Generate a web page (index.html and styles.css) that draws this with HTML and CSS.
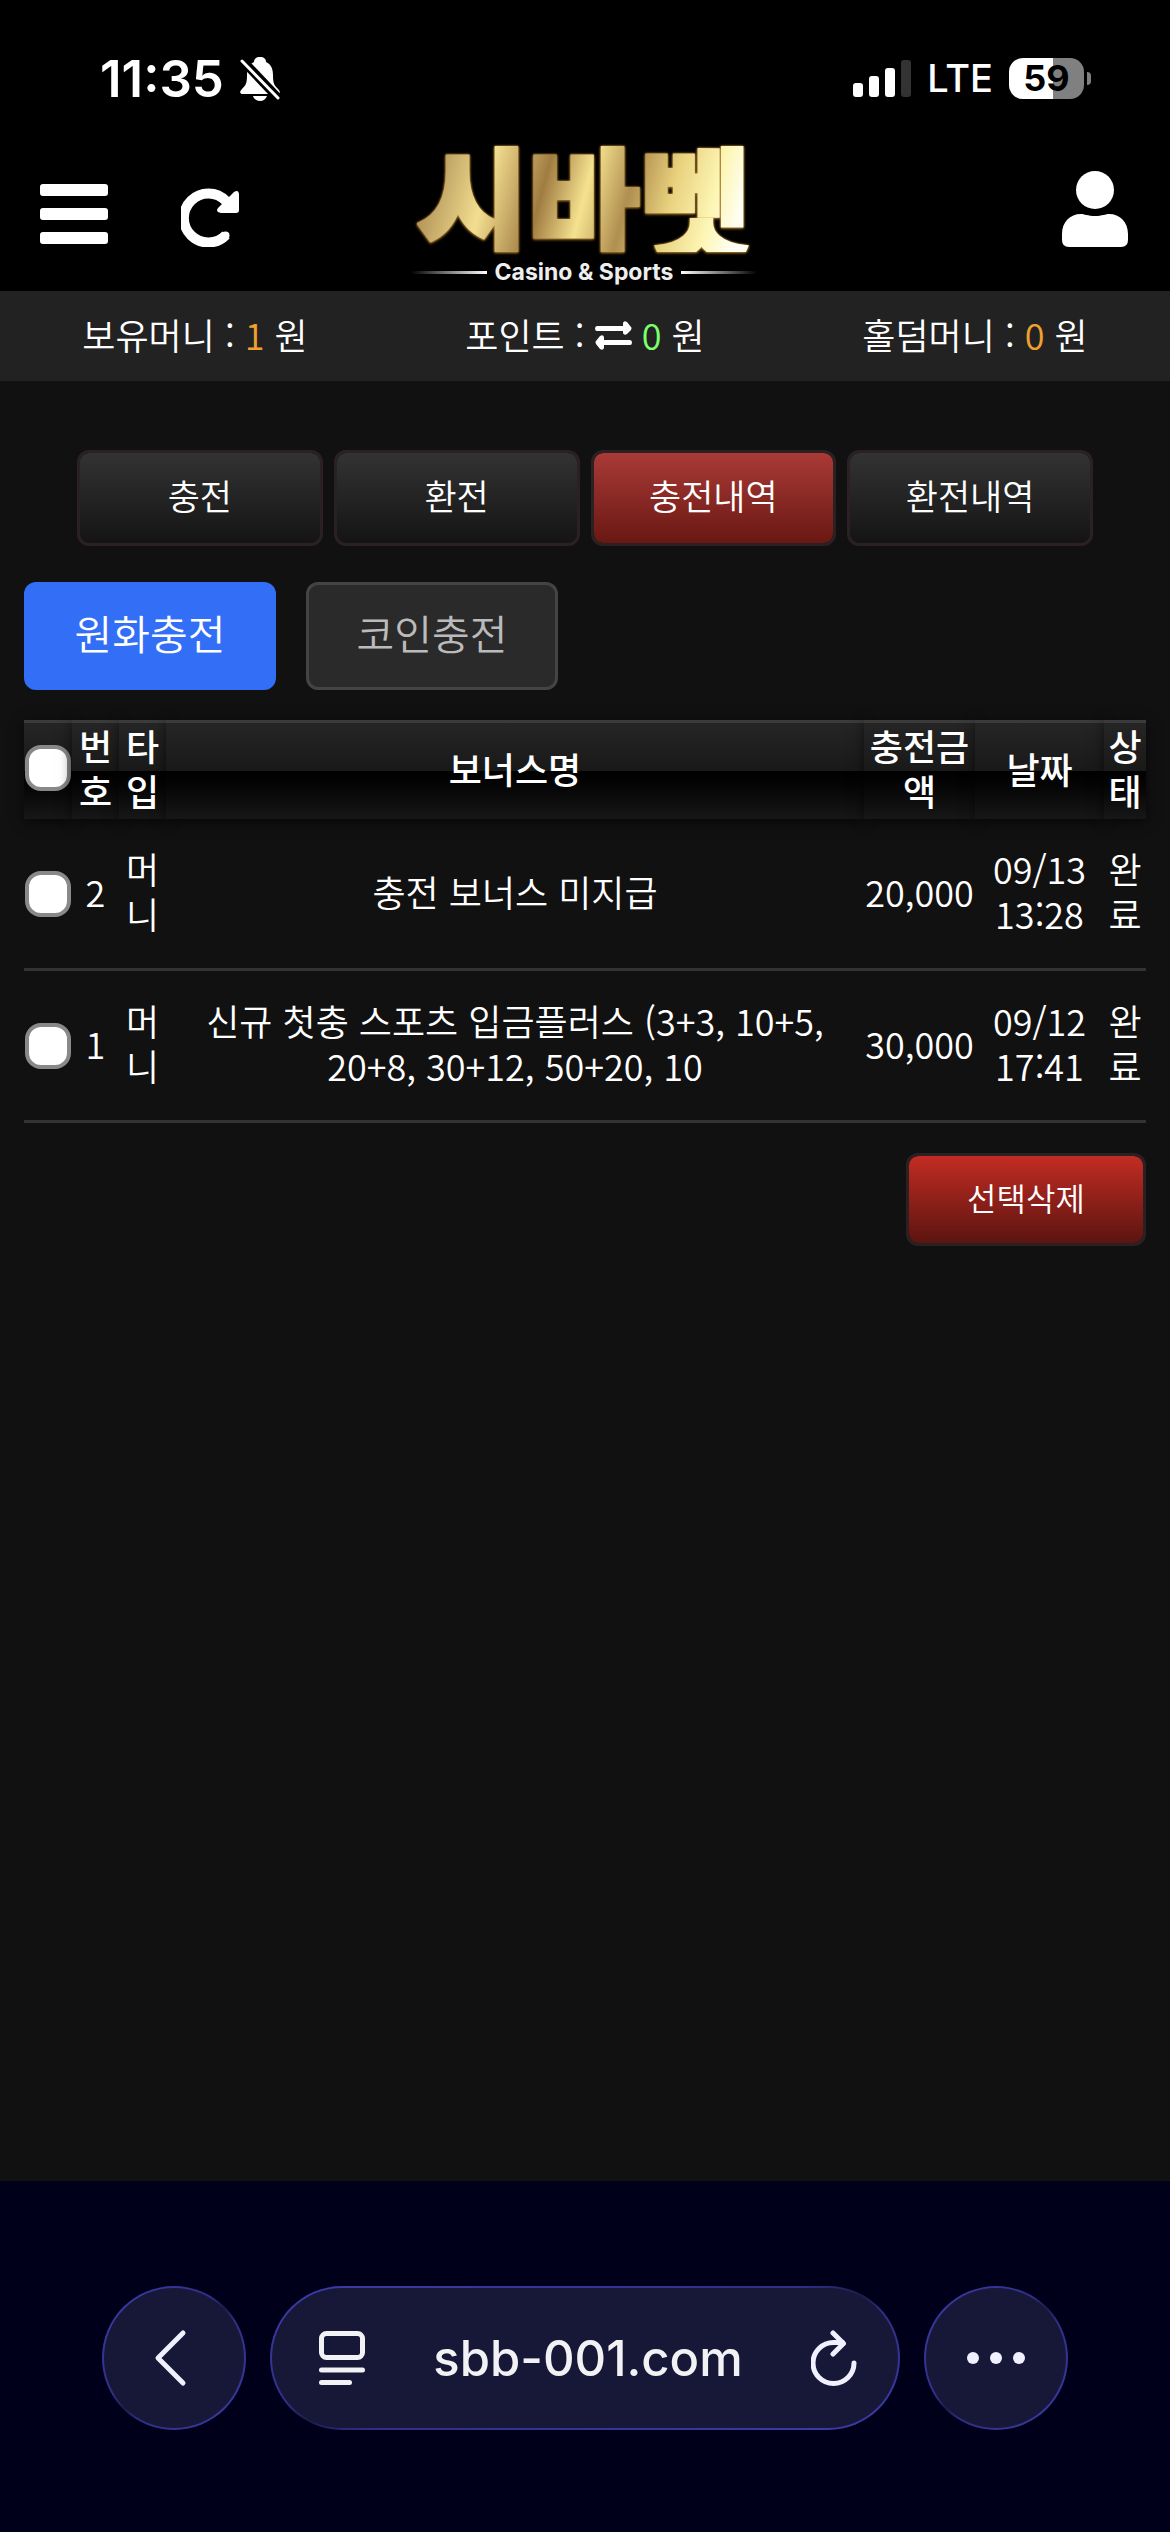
FILE: index.html
```
<!DOCTYPE html>
<html lang="ko">
<head>
    <meta charset="UTF-8">
    <meta name="viewport" content="width=device-width, initial-scale=1.0">
    <title>충전내역</title>
    <link rel="stylesheet" href="styles.css">
</head>
<body>
    <div class="status-bar">
        <div class="status-left">
            <span class="clock">11:35</span>
            <svg class="bell" viewBox="0 0 40 44" aria-hidden="true">
                <path d="M20 0c-4 0-6 2-6 5C9 7 7 12 7 18c0 8-1 10-5 14-3 3-2 5 1 5h34c3 0 4-2 1-5-4-4-5-6-5-14 0-6-2-11-7-13 0-3-2-5-6-5z" fill="#fff"/>
                <path d="M13 39h14c-1 3-4 5-7 5s-6-2-7-5z" fill="#fff"/>
                <path d="M2 3l36 38" stroke="#000" stroke-width="9"/>
                <path d="M2 4l36 37" stroke="#fff" stroke-width="3" stroke-linecap="round"/>
            </svg>
        </div>
        <div class="status-right">
            <svg class="signal" viewBox="0 0 58 38" aria-hidden="true">
                <rect x="0" y="23" width="10" height="14" rx="3" fill="#fff"/>
                <rect x="16" y="16" width="10" height="21" rx="3" fill="#fff"/>
                <rect x="32" y="8" width="10" height="29" rx="3" fill="#fff"/>
                <rect x="48" y="0" width="10" height="37" rx="3" fill="#333"/>
            </svg>
            <span class="network">LTE</span>
            <div class="battery"><span class="battery-level">59</span></div>
        </div>
    </div>

    <header class="header">
        <div class="header-left">
            <button type="button" class="icon-btn" aria-label="메뉴">
                <svg width="68" height="60" viewBox="0 0 68 60" fill="#fff">
                    <rect y="0" width="68" height="12" rx="3"/>
                    <rect y="24" width="68" height="12" rx="3"/>
                    <rect y="48" width="68" height="12" rx="3"/>
                </svg>
            </button>
            <button type="button" class="icon-btn reload-btn" aria-label="새로고침">
                <svg width="58" height="60" viewBox="0 0 58 60">
                    <path d="M45 14A24.500 24.500 0 1 0 45 48" fill="none" stroke="#fff" stroke-width="10"/>
                    <circle cx="44.500" cy="48.500" r="4" fill="#fff"/>
                    <path d="M53 5q5-3 5 3v15q0 3-3 3H40q-6-1-3-5z" fill="#fff"/>
                </svg>
            </button>
        </div>
        <a href="#" class="logo">
            <span class="logo-name">시바벳</span>
            <span class="logo-sub">Casino &amp; Sports</span>
        </a>
        <button type="button" class="icon-btn user-btn" aria-label="내 정보">
            <svg width="66" height="76" viewBox="0 0 66 76" fill="#fff">
                <ellipse cx="33" cy="19" rx="19" ry="19"/>
                <path d="M19 43c3 0 7 2 14 2s11-2 14-2c11 0 19 8 19 20v6q0 7-7 7H7q-7 0-7-7v-6c0-12 8-20 19-20z"/>
            </svg>
        </button>
    </header>

    <div class="money-bar">
        <div class="money">보유머니 : <span class="orange">1</span> 원</div>
        <div class="money">포인트 :
            <svg class="swap" width="37" height="29" viewBox="0 0 37 29" fill="#fff" aria-label="전환">
                <path d="M2 5h26V2q1-3 4-1l4 5q1 1 0 3l-4 4q-3 2-4-1V10H2q-2 0-2-2.500T2 5z"/>
                <path d="M35 19H9v-3q-1-3-4-1l-4 5q-1 1 0 3l4 5q3 2 4-1v-3h26q2 0 2-2.500T35 19z"/>
            </svg>
            <span class="green">0</span> 원</div>
        <div class="money">홀덤머니 : <span class="orange">0</span> 원</div>
    </div>

    <main class="content">
        <nav class="menu">
            <button type="button" class="menu-btn">충전</button>
            <button type="button" class="menu-btn">환전</button>
            <button type="button" class="menu-btn active">충전내역</button>
            <button type="button" class="menu-btn">환전내역</button>
        </nav>

        <div class="tabs">
            <button type="button" class="tab active">원화충전</button>
            <button type="button" class="tab">코인충전</button>
        </div>

        <table class="history">
            <colgroup>
                <col class="col-check">
                <col class="col-no">
                <col class="col-type">
                <col>
                <col class="col-amount">
                <col class="col-date">
                <col class="col-state">
            </colgroup>
            <thead>
                <tr>
                    <th><input type="checkbox" class="check" aria-label="전체 선택"></th>
                    <th>번호</th>
                    <th>타입</th>
                    <th>보너스명</th>
                    <th>충전금액</th>
                    <th>날짜</th>
                    <th>상태</th>
                </tr>
            </thead>
            <tbody>
                <tr>
                    <td class="select"><input type="checkbox" class="check" aria-label="2번 선택"></td>
                    <td>2</td>
                    <td>머니</td>
                    <td class="bonus">충전 보너스 미지급</td>
                    <td class="amount">20,000</td>
                    <td>09/13 13:28</td>
                    <td>완료</td>
                </tr>
                <tr>
                    <td class="select"><input type="checkbox" class="check" aria-label="1번 선택"></td>
                    <td>1</td>
                    <td>머니</td>
                    <td class="bonus">신규 첫충 스포츠 입금플러스 (3+3, 10+5, 20+8, 30+12, 50+20, 10</td>
                    <td class="amount">30,000</td>
                    <td>09/12 17:41</td>
                    <td>완료</td>
                </tr>
            </tbody>
        </table>

        <div class="actions">
            <button type="button" class="delete-btn">선택삭제</button>
        </div>
    </main>

    <footer class="browser-bar">
        <button type="button" class="glass round" aria-label="뒤로">
            <svg width="40" height="60" viewBox="0 0 40 60">
                <path d="M29 5L4 30l25 25" fill="none" stroke="#f0f0ff" stroke-width="5" stroke-linecap="round" stroke-linejoin="round"/>
            </svg>
        </button>
        <div class="glass address">
            <svg width="46" height="54" viewBox="0 0 46 54" fill="none" stroke="#f2f2f5" stroke-width="5" stroke-linecap="round" aria-hidden="true">
                <rect x="2.500" y="2.500" width="41" height="24" rx="5"/>
                <path d="M2.500 39h41M2.500 51.500h28"/>
            </svg>
            <span class="url">sbb-001.com</span>
            <button type="button" class="icon-btn" aria-label="페이지 새로고침">
                <svg width="46" height="56" viewBox="0 0 46 56" fill="none" stroke="#f0f0ff" stroke-width="5" stroke-linecap="round" stroke-linejoin="round">
                    <path d="M43 33A20.500 20.500 0 1 1 22.500 12.500h9"/>
                    <path d="M22 3l10.500 10.500L22 24"/>
                </svg>
            </button>
        </div>
        <button type="button" class="glass round" aria-label="더보기">
            <svg width="58" height="12" viewBox="0 0 58 12" fill="#f0f0ff">
                <circle cx="6" cy="6" r="6"/>
                <circle cx="29" cy="6" r="6"/>
                <circle cx="52" cy="6" r="6"/>
            </svg>
        </button>
    </footer>
</body>
</html>
```

FILE: styles.css
```
* {
    margin: 0;
    padding: 0;
    box-sizing: border-box;
}

body {
    display: flex;
    flex-direction: column;
    min-height: 100vh;
    background-color: #111;
    color: #fff;
    font-family: 'Noto Sans CJK KR', sans-serif;
    font-size: 36px;
    font-weight: 350;
    line-height: 45px;
}

button {
    border: none;
    background: none;
    color: inherit;
    font: inherit;
    cursor: pointer;
}

svg {
    display: block;
}

/* Phone status bar */
.status-bar {
    display: flex;
    justify-content: space-between;
    align-items: center;
    height: 141px;
    padding: 16px 78px 0 100px;
    background-color: #000;
    font-family: Inter, sans-serif;
}

.status-left,
.status-right {
    display: flex;
    align-items: center;
    gap: 16px;
}

.clock {
    font-size: 51px;
    font-weight: 600;
}

.bell {
    width: 40px;
    height: 44px;
}

.signal {
    width: 58px;
    height: 38px;
}

.network {
    font-size: 38px;
    font-weight: 500;
}

.battery {
    position: relative;
    width: 75px;
    height: 41px;
    margin-right: 8px;
    border-radius: 14px;
    background: linear-gradient(90deg, #fff 59%, #808080 59%);
    text-align: center;
}

.battery::after {
    content: "";
    position: absolute;
    top: 14px;
    right: -7px;
    width: 4px;
    height: 13px;
    border-radius: 0 4px 4px 0;
    background-color: #808080;
}

.battery-level {
    display: block;
    color: #000;
    font-size: 36px;
    font-weight: 700;
    line-height: 41px;
}

/* Header */
.header {
    display: grid;
    grid-template-columns: 1fr auto 1fr;
    align-items: center;
    height: 150px;
    padding: 0 42px 4px 40px;
    background-color: #000;
}

.header-left {
    display: flex;
    align-items: center;
    gap: 73px;
}

.reload-btn {
    padding-top: 6px;
}

.user-btn {
    justify-self: end;
    padding-bottom: 10px;
}

.logo {
    display: flex;
    flex-direction: column;
    align-items: center;
    gap: 8px;
    color: #fff;
    text-decoration: none;
}

.logo-name {
    background: linear-gradient(105deg, #9c7a45 0%, #f2de90 22%, #a17c42 38%, #f5e28f 50%, #b08f50 62%, #e9d27e 74%, #fdf6b5 86%, #fffef2 94%);
    -webkit-background-clip: text;
    background-clip: text;
    color: transparent;
    -webkit-text-stroke: 4px transparent;
    font-size: 121px;
    font-weight: 900;
    line-height: 108px;
    filter: drop-shadow(0 0 1px #c9993f) drop-shadow(0 1px 1px #7a531c);
}

.logo-sub {
    display: flex;
    align-items: center;
    gap: 8px;
    color: #eee;
    font-family: Inter, sans-serif;
    font-size: 23px;
    font-weight: 700;
    line-height: 24px;
}

.logo-sub::before,
.logo-sub::after {
    content: "";
    width: 76px;
    height: 3px;
    background: linear-gradient(90deg, transparent, #fff);
}

.logo-sub::after {
    background: linear-gradient(270deg, transparent, #fff);
}

/* Balance */
.money-bar {
    display: flex;
    align-items: center;
    height: 90px;
    padding-bottom: 4px;
    background-color: #222;
}

.money {
    flex: 1;
    text-align: center;
    white-space: nowrap;
}

.swap {
    display: inline-block;
}

.orange {
    color: #f0a030;
}

.green {
    color: #7cff6b;
}

/* Content */
.content {
    flex: 1;
    padding: 69px 24px 0;
}

.menu {
    display: flex;
    gap: 11px;
    padding: 0 53px;
}

.menu-btn {
    flex: 1;
    height: 96px;
    padding-bottom: 7px;
    border: 3px solid #2b2123;
    border-radius: 12px;
    background: linear-gradient(#333, #141414) padding-box;
    font-size: 35px;
}

.menu-btn.active {
    background: linear-gradient(#a93a36, #6a1813) padding-box;
}

.tabs {
    display: flex;
    gap: 30px;
    margin-top: 36px;
}

.tab {
    width: 252px;
    height: 108px;
    padding-bottom: 7px;
    border: 3px solid #444;
    border-radius: 12px;
    background-color: #2a2a2a;
    color: #bbb;
    font-size: 41px;
}

.tab.active {
    border-color: #326ef6;
    background-color: #326ef6;
    color: #fff;
}

.history {
    width: 100%;
    margin-top: 30px;
    border-spacing: 0;
    table-layout: fixed;
}

.col-check {
    width: 48px;
}

.col-no,
.col-type {
    width: 47px;
}

.col-amount {
    width: 111px;
}

.col-date {
    width: 129px;
}

.col-state {
    width: 42px;
}

.history th {
    height: 99px;
    padding-bottom: 6px;
    border-top: 3px solid #3b3b3b;
    background: linear-gradient(#252525, #191919 50%, #000 50%, #050505 65%, #171717);
    box-shadow: 0 3px 12px rgba(0, 0, 0, 0.6);
    font-weight: 500;
    vertical-align: middle;
}

.history td {
    padding: 27px 0 32px;
    border-bottom: 3px solid #333;
    text-align: center;
    vertical-align: middle;
}

.history td.select {
    padding: 30px 0;
}

.history td.bonus {
    padding: 27px 20px 32px;
}

.history td.amount {
    white-space: nowrap;
}

.check {
    display: block;
    width: 46px;
    height: 46px;
    margin: 0 auto;
    border: 4px solid #89898b;
    border-radius: 16px;
    background-color: #fff;
    appearance: none;
}

.check:checked {
    background-color: #326ef6;
}

.actions {
    display: flex;
    justify-content: flex-end;
    margin-top: 30px;
}

.delete-btn {
    width: 240px;
    height: 93px;
    padding-bottom: 4px;
    border: 3px solid #2b2123;
    border-radius: 12px;
    background: linear-gradient(#c22c23, #5c1410) padding-box;
    font-size: 32px;
}

/* Browser toolbar */
.browser-bar {
    display: flex;
    gap: 24px;
    padding: 105px 102px 102px;
    background-color: #00001a;
}

.glass {
    display: flex;
    justify-content: center;
    align-items: center;
    height: 144px;
    border: 2px solid transparent;
    border-radius: 72px;
    background: linear-gradient(#171738, #171738) padding-box,
        linear-gradient(to bottom right, #3c3ca8, #2f2f88 42%, #1c1c48 50%, #2f2f88 58%, #3c3ca8) border-box;
}

.round {
    width: 144px;
}

.address {
    flex: 1;
    justify-content: space-between;
    padding: 0 41px 0 47px;
}

.url {
    color: #f2f2f5;
    font-family: Inter, sans-serif;
    font-size: 49px;
    font-weight: 500;
}
```
